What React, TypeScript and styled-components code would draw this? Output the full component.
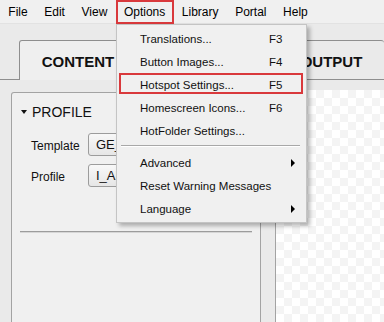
import React from "react";
import styled, { createGlobalStyle } from "styled-components";

const GlobalStyle = createGlobalStyle`
  html, body { margin: 0; padding: 0; }
  body {
    background: #eaeaea;
    font-family: "Liberation Sans", Arial, sans-serif;
    overflow: hidden;
  }
`;

const RED = "#d9393c";

const Root = styled.div`
  position: relative;
  width: 384px;
  height: 322px;
  overflow: hidden;
  background: #eaeaea;
`;

const MenuBar = styled.div`
  display: flex;
  height: 24px;
  background: #f0f0f0;
  border-bottom: 1px solid #e2e2e2;
  box-sizing: border-box;
`;

const MenuItem = styled.div<{ $active?: boolean }>`
  box-sizing: border-box;
  height: 24px;
  padding: 0 ${(p) => (p.$active ? "6.3px" : "8.3px")};
  display: flex;
  align-items: center;
  font-size: 12px;
  color: #000;
  border: ${(p) => (p.$active ? `2px solid ${RED}` : "none")};
`;

const TabBar = styled.div`
  display: flex;
  height: 40px;
  margin-top: 16px;
`;

const TabGap = styled.div<{ $w?: number }>`
  box-sizing: border-box;
  ${(p) => (p.$w ? `width: ${p.$w}px;` : "flex: 1;")}
  border-bottom: 1px solid #8e8e8e;
`;

const Tab = styled.div<{ $selected?: boolean; $w: number }>`
  box-sizing: border-box;
  width: ${(p) => p.$w}px;
  height: 40px;
  display: flex;
  align-items: center;
  justify-content: center;
  padding-top: 2px;
  font-size: 15px;
  font-weight: bold;
  color: #111;
  background: ${(p) => (p.$selected ? "#efefef" : "#eaeaea")};
  border-top: 1px solid #8e8e8e;
  border-left: 1px solid #8e8e8e;
  border-right: ${(p) => (p.$selected ? "1px solid #8e8e8e" : "none")};
  border-bottom: ${(p) => (p.$selected ? "none" : "1px solid #8e8e8e")};
  border-radius: 3px 3px 0 0;
`;

const Body = styled.div`
  display: flex;
  align-items: flex-start;
  height: 242px;
`;

const LeftBox = styled.div`
  box-sizing: border-box;
  width: 250px;
  height: 240px;
  margin: 12px 0 0 11px;
  background: #f0f0f0;
  border: 1px solid #a3a3a3;
  border-bottom: none;
  border-radius: 3px 3px 0 0;
  padding: 9px 8px 0 9px;
`;

const SectionHeader = styled.div`
  height: 20px;
  display: flex;
  align-items: center;
  gap: 5px;
  font-size: 14px;
  color: #111;
`;

const DownTriangle = styled.span`
  width: 0;
  height: 0;
  border-left: 3.5px solid transparent;
  border-right: 3.5px solid transparent;
  border-top: 4px solid #111;
  margin-top: -1px;
`;

const Form = styled.div`
  display: flex;
  flex-direction: column;
  gap: 8px;
  margin-top: 11px;
  padding-left: 10px;
`;

const FormRow = styled.div`
  display: flex;
  align-items: center;
  height: 23px;
`;

const Label = styled.div`
  width: 57px;
  font-size: 12px;
  color: #111;
  padding-top: 2px;
`;

const SelectBox = styled.div`
  box-sizing: border-box;
  width: 150px;
  height: 23px;
  border: 1px solid #9c9c9c;
  border-radius: 3px;
  background: linear-gradient(#f8f8f8, #e6e6e6);
  display: flex;
  align-items: center;
  padding-left: 7px;
  font-size: 13px;
  color: #111;
`;

const Divider = styled.div`
  margin: 44px 0 0 -1px;
  border-top: 1px solid #9c9c9c;
  border-bottom: 1px solid #d6d6d6;
`;

const Checker = styled.div`
  flex: 1;
  height: 240px;
  margin: 10px 0 0 14px;
  border-left: 1px solid #a3a3a3;
  background: repeating-conic-gradient(#f4f4f4 0 25%, #ffffff 0 50%) 0 0 / 16px 16px;
`;

const Dropdown = styled.div`
  position: absolute;
  left: 116px;
  top: 24px;
  width: 191px;
  box-sizing: border-box;
  background: #f0f0f0;
  border: 1px solid #c4c4c4;
  padding: 2px 0 2px;
  box-shadow: 3px 3px 4px rgba(0, 0, 0, 0.28);
`;

const DropItem = styled.div<{ $highlight?: boolean }>`
  position: relative;
  height: 23px;
  display: flex;
  align-items: center;
  padding-left: 23px;
  font-size: 11.5px;
  color: #111;
  white-space: nowrap;
  &::after {
    content: "";
    display: ${(p) => (p.$highlight ? "block" : "none")};
    position: absolute;
    left: 2px;
    right: 3px;
    top: 0;
    bottom: 2px;
    border: 2px solid ${RED};
  }
`;

const DropLabel = styled.span`
  min-width: 129px;
  flex-shrink: 0;
`;

const Shortcut = styled.span``;

const SubArrow = styled.span`
  margin-left: auto;
  margin-right: 11px;
  width: 0;
  height: 0;
  border-top: 4px solid transparent;
  border-bottom: 4px solid transparent;
  border-left: 4px solid #000;
`;

const Separator = styled.div`
  height: 9px;
  box-sizing: border-box;
  padding-top: 3px;
  margin: 0 6px 0 4px;
  &::before {
    content: "";
    display: block;
    border-top: 1px solid #a8a8a8;
    border-bottom: 1px solid #ffffff;
  }
`;

const menus = ["File", "Edit", "View", "Options", "Library", "Portal", "Help"];

type Entry = { label: string; key?: string; sub?: boolean; hl?: boolean } | "sep";

const entries: Entry[] = [
  { label: "Translations...", key: "F3" },
  { label: "Button Images...", key: "F4" },
  { label: "Hotspot Settings...", key: "F5", hl: true },
  { label: "Homescreen Icons...", key: "F6" },
  { label: "HotFolder Settings..." },
  "sep",
  { label: "Advanced", sub: true },
  { label: "Reset Warning Messages" },
  { label: "Language", sub: true },
];

export default function App() {
  return (
    <Root>
      <GlobalStyle />
      <MenuBar>
        {menus.map((m) => (
          <MenuItem key={m} $active={m === "Options"}>
            {m}
          </MenuItem>
        ))}
      </MenuBar>
      <TabBar>
        <TabGap $w={19} />
        <Tab $selected $w={118}>CONTENT</Tab>
        <TabGap />
        <Tab $w={106}>OUTPUT</Tab>
      </TabBar>
      <Body>
        <LeftBox>
          <SectionHeader>
            <DownTriangle />
            PROFILE
          </SectionHeader>
          <Form>
            <FormRow>
              <Label>Template</Label>
              <SelectBox>GE_</SelectBox>
            </FormRow>
            <FormRow>
              <Label>Profile</Label>
              <SelectBox>I_AN</SelectBox>
            </FormRow>
          </Form>
          <Divider />
        </LeftBox>
        <Checker />
      </Body>
      <Dropdown>
        {entries.map((e, i) =>
          e === "sep" ? (
            <Separator key={i} />
          ) : (
            <DropItem key={i} $highlight={e.hl}>
              <DropLabel>{e.label}</DropLabel>
              {e.key && <Shortcut>{e.key}</Shortcut>}
              {e.sub && <SubArrow />}
            </DropItem>
          )
        )}
      </Dropdown>
    </Root>
  );
}
